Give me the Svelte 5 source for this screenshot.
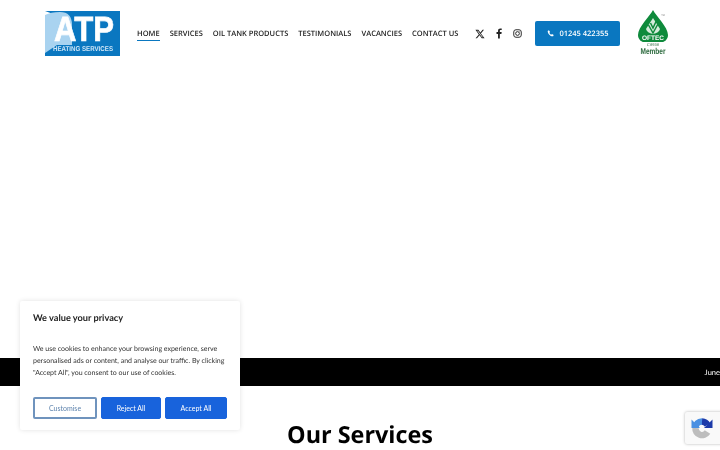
<script>
  const nav = ['HOME', 'SERVICES', 'OIL TANK PRODUCTS', 'TESTIMONIALS', 'VACANCIES', 'CONTACT US'];
</script>

<div class="page">
  <header class="header">
    <svg class="logo" viewBox="0 0 75 45" width="75" height="45" aria-label="ATP Heating Services">
      <rect width="75" height="45" fill="#0a77c0" />
      <path d="M0 0 L11 4 L0 4 Z" fill="#fff" />
      <path d="M0 4 Q6 1 15 1 Q27 1 27 14 L27 34 L12 34 L0 42 Z" fill="#a9d3f0" />
      <text x="9" y="30" class="atp" textLength="60" lengthAdjust="spacingAndGlyphs">ATP</text>
      <text x="8" y="40" class="heating" textLength="60" lengthAdjust="spacingAndGlyphs">HEATING SERVICES</text>
    </svg>

    <nav class="nav">
      {#each nav as item, i}
        <a class="nav-link" class:active={i === 0} href="#top">{item}</a>
      {/each}
    </nav>

    <div class="social">
      <svg width="10" height="10" viewBox="0 0 24 24"><path fill="#222" d="M18.200 2h3.400l-7.400 8.500L23 22h-6.800l-5.300-7-6.100 7H1.300l7.900-9.100L1 2h7l4.800 6.400zM17 20h1.900L7 3.900H5z" /></svg>
      <svg width="10" height="11" viewBox="0 0 24 24"><path fill="#222" d="M14 24V13h3.800l.6-4.400H14V5.800c0-1.300.4-2.100 2.200-2.100h2.300V.2C18.100.1 16.800 0 15.300 0 12 0 9.700 2 9.700 5.600v3H6V13h3.700v11z" /></svg>
      <svg width="9" height="9" viewBox="0 0 24 24" fill="none" stroke="#222" stroke-width="2.500"><rect x="2" y="2" width="20" height="20" rx="6" /><circle cx="12" cy="12" r="5" /><circle cx="18" cy="6" r="1" fill="#222" stroke="none" /></svg>
    </div>

    <a class="call" href="#top">
      <svg width="7" height="7" viewBox="0 0 24 24"><path fill="#fff" d="M6.600 1 2.500 3C1.500 11 12 23 21 21.500l2-4.500-6-3-2.500 2.500C11.500 15 9 12.500 8 9.500L10.500 7z" /></svg>
      <span>01245 422355</span>
    </a>

    <svg class="oftec" viewBox="0 0 31 47" width="31" height="47" aria-label="OFTEC Member">
      <path d="M15 0 C18 6 30 17 30 25 C30 29 27 31 25 32 H5 C3 31 0 29 0 25 C0 17 12 6 15 0Z" fill="#0f8a3c" />
      <path d="M15 8 L22 19 Q21 23 15 24 Q9 23 8 19 Z" fill="#d5ebdb" />
      <path d="M10.500 15 L15 23 L20.500 13 M12.500 13 L15 18 L18.500 10.500" fill="none" stroke="#0f8a3c" stroke-width="1.500" />
      <rect x="2" y="24.500" width="26" height="7" rx="3" fill="#0f8a3c" />
      <text x="15" y="30.300" class="oftec-name" textLength="22" lengthAdjust="spacingAndGlyphs">OFTEC</text>
      <text x="15" y="36" class="oftec-reg">C8938</text>
      <text x="15" y="44" class="oftec-member" textLength="25" lengthAdjust="spacingAndGlyphs">Member</text>
      <text x="25" y="6" class="oftec-tm">TM</text>
    </svg>
  </header>

  <main class="hero"></main>

  <div class="ticker"><span>June</span></div>

  <section class="services">
    <h2>Our Services</h2>
  </section>

  <aside class="cookie">
    <h3>We value your privacy</h3>
    <p>We use cookies to enhance your browsing experience, serve personalised ads or content, and analyse our traffic. By clicking "Accept All", you consent to our use of cookies.</p>
    <div class="cookie-actions">
      <button class="btn outline">Customise</button>
      <button class="btn solid reject">Reject All</button>
      <button class="btn solid accept">Accept All</button>
    </div>
  </aside>

  <div class="recaptcha">
    <svg width="22" height="22" viewBox="0 0 22 22" fill="none">
      <path d="M4.500 11 A6.500 6.500 0 0 1 11 4.500" stroke="#4a90e2" stroke-width="6.500" />
      <path d="M11 4.500 A6.500 6.500 0 0 1 16.500 8" stroke="#1c3aa9" stroke-width="6.500" />
      <path d="M13 11 L21.500 11 L21.500 2.500 Z" fill="#1c3aa9" />
      <path d="M4.500 11 A6.500 6.500 0 0 0 16.500 15" stroke="#bdbdbd" stroke-width="6.500" />
      <path d="M0.500 11 H9 L0.500 2.500 Z" fill="#4a90e2" />
    </svg>
  </div>
</div>

<style>
  :global(body) {
    margin: 0;
    background: #fff;
    overflow: hidden;
  }

  .page {
    position: relative;
    width: 720px;
    height: 450px;
    overflow: hidden;
    font-family: "Open Sans", sans-serif;
    text-rendering: geometricPrecision;
    background: #fff;
    filter: blur(0.3px);
  }

  .header {
    display: flex;
    align-items: center;
    height: 67px;
    padding-left: 45px;
    box-sizing: border-box;
  }

  .logo {
    flex: none;
  }

  .atp {
    font: 700 35px "Liberation Sans", sans-serif;
    fill: #fff;
    stroke: #fff;
    stroke-width: 0.700px;
  }

  .heating {
    font: 700 7px "Liberation Sans", sans-serif;
    fill: #cfe6f7;
  }

  .nav {
    display: flex;
    gap: 10px;
    margin-left: 17px;
    margin-top: 1px;
  }

  .nav-link {
    font-size: 7.500px;
    font-weight: 600;
    color: #222;
    text-decoration: none;
    line-height: 12px;
    border-bottom: 1px solid transparent;
  }

  .nav-link.active {
    border-bottom-color: #0a77c0;
  }

  .social {
    display: flex;
    align-items: center;
    gap: 9px;
    margin-left: 17px;
  }

  .call {
    display: flex;
    align-items: center;
    justify-content: center;
    gap: 5px;
    width: 85px;
    height: 25px;
    margin-left: 13px;
    background: #0a77c0;
    border-radius: 2px;
    color: #fff;
    font-size: 7.500px;
    font-weight: 600;
    text-decoration: none;
  }

  .oftec {
    margin-left: 18px;
  }

  .oftec text {
    text-anchor: middle;
  }

  .oftec-name {
    font: 700 6.500px "Liberation Sans", sans-serif;
    fill: #fff;
  }

  .oftec-reg {
    font: 400 4px "Liberation Sans", sans-serif;
    fill: #2d6b3f;
  }

  .oftec-member {
    font: 700 8.500px "Liberation Sans", sans-serif;
    fill: #2d6b3f;
  }

  .oftec-tm {
    font: 400 2.500px "Liberation Sans", sans-serif;
    fill: #777;
  }

  .hero {
    height: 291px;
  }

  .ticker {
    display: flex;
    justify-content: flex-end;
    align-items: center;
    height: 28px;
    background: #000;
    color: #fff;
    font: 400 7.500px "Lato", sans-serif;
  }

  .services h2 {
    margin: 32px 0 0;
    text-align: center;
    font-size: 23.400px;
    line-height: 32px;
    font-weight: 700;
    color: #000;
  }

  .cookie {
    position: absolute;
    left: 20px;
    top: 301px;
    width: 220px;
    height: 129px;
    box-sizing: border-box;
    padding: 11px 13px;
    background: #fff;
    border-radius: 2px;
    box-shadow: 0 0 5px rgba(0, 0, 0, 0.120);
    font-family: "Lato", sans-serif;
  }

  .cookie h3 {
    margin: 0;
    font-size: 9.200px;
    line-height: 12px;
    font-weight: 700;
    color: #212121;
  }

  .cookie p {
    margin: 19px 0 0;
    font-size: 7px;
    line-height: 12px;
    color: #333;
  }

  .cookie-actions {
    display: flex;
    gap: 4px;
    margin-top: 18px;
  }

  .btn {
    box-sizing: border-box;
    height: 22px;
    padding: 0;
    border-radius: 2px;
    font: 400 7px "Lato", sans-serif;
  }

  .outline {
    width: 64px;
    background: #fff;
    border: 2px solid #6f93bd;
    color: #5f84ae;
  }

  .solid {
    background: #1863dc;
    border: 1px solid #1863dc;
    color: #fff;
  }

  .reject {
    width: 60px;
  }

  .accept {
    width: 62px;
  }

  .recaptcha {
    position: absolute;
    left: 685px;
    top: 412px;
    width: 40px;
    height: 32px;
    display: flex;
    align-items: center;
    padding-left: 6px;
    box-sizing: border-box;
    background: #f9f9f9;
    border-radius: 2px;
    box-shadow: 0 0 3px rgba(0, 0, 0, 0.300);
  }
</style>
